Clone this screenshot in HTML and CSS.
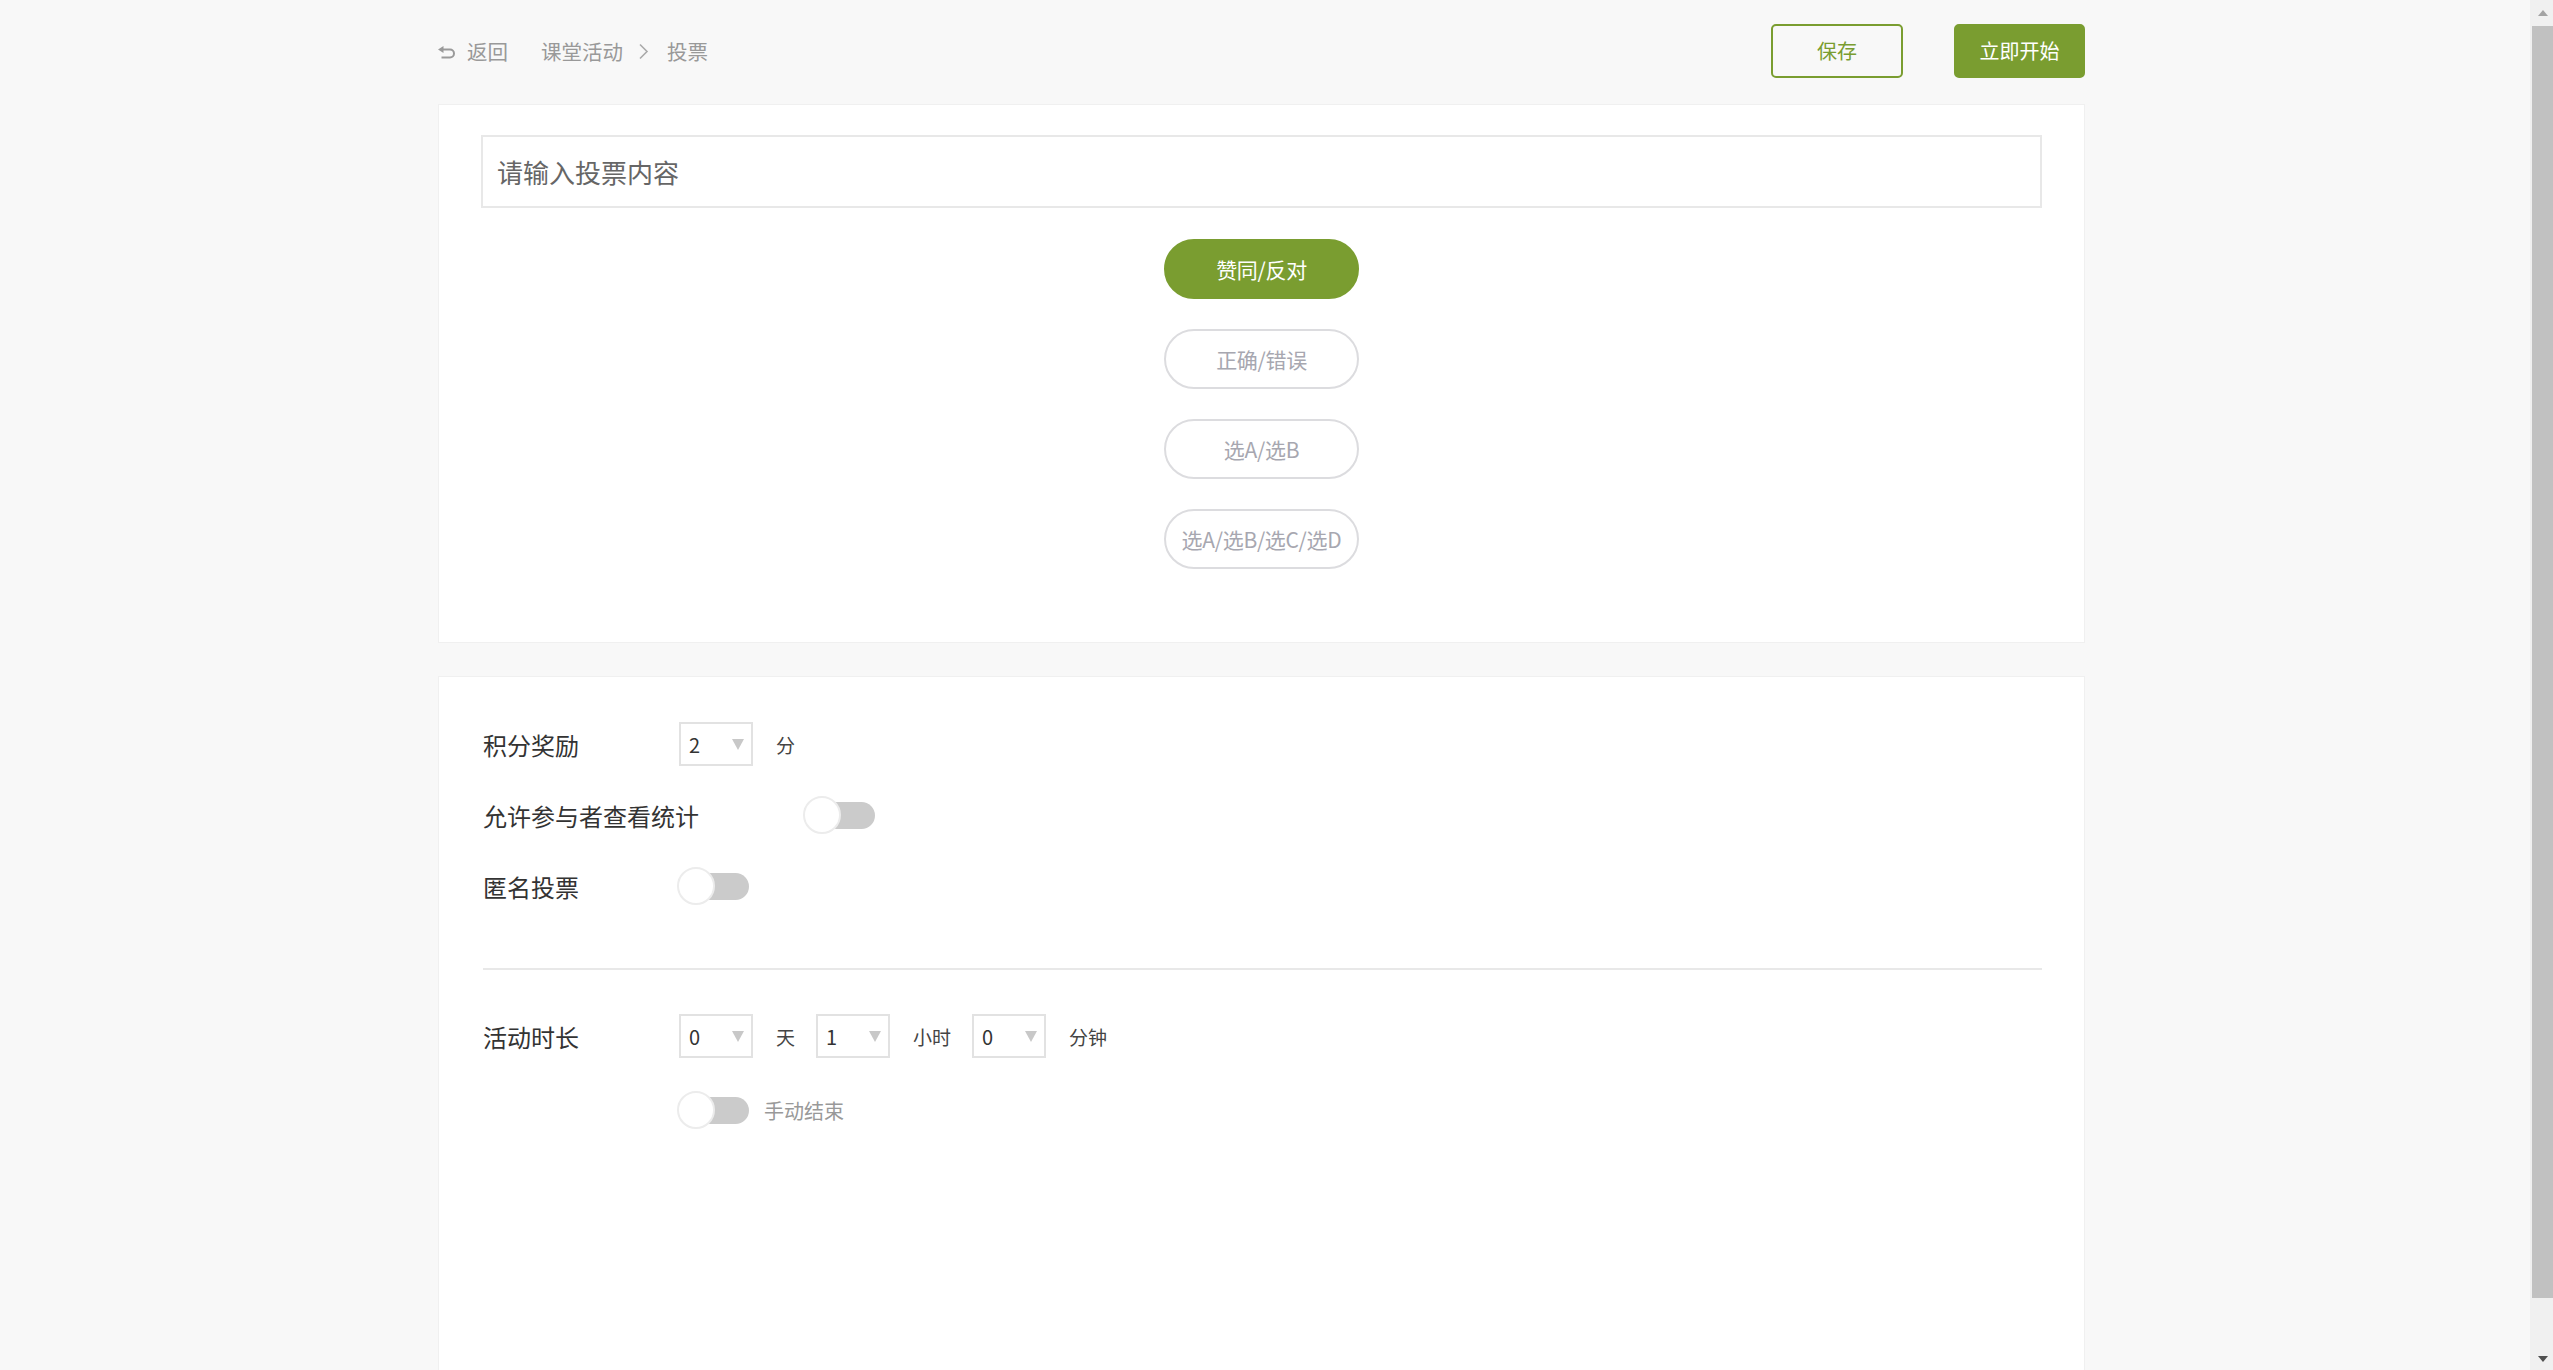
FILE: index.html
```html
<!DOCTYPE html>
<html lang="zh-CN">
<head>
<meta charset="utf-8">
<title>投票</title>
<link rel="stylesheet" href="styles.css">
</head>
<body>
<div class="app">
  <div class="main">
    <div class="container">
      <header class="topbar">
        <nav class="crumbs">
          <span class="back">
            <svg class="back-icon" width="18" height="13" viewBox="0 0 18 13">
              <polygon points="0,3.5 5.5,0 5.5,7" fill="#9a9a9a"/>
              <path d="M5 3.5 H12 A4 4 0 0 1 12 11.5 H3.5" fill="none" stroke="#9a9a9a" stroke-width="2"/>
            </svg>
            <span>返回</span>
          </span>
          <span class="crumb">课堂活动</span>
          <svg class="chev" width="11" height="17" viewBox="0 0 11 17"><polyline points="2,1.5 9,8.5 2,15.5" fill="none" stroke="#aaa" stroke-width="1.6"/></svg>
          <span class="crumb">投票</span>
        </nav>
        <div class="actions">
          <button class="btn btn-outline">保存</button>
          <button class="btn btn-solid">立即开始</button>
        </div>
      </header>

      <section class="card card-top">
        <input class="vote-input" type="text" placeholder="请输入投票内容">
        <div class="pills">
          <div class="pill active">赞同/反对</div>
          <div class="pill">正确/错误</div>
          <div class="pill">选A/选B</div>
          <div class="pill">选A/选B/选C/选D</div>
        </div>
      </section>

      <section class="card card-settings">
        <div class="row">
          <span class="label">积分奖励</span>
          <div class="select"><span>2</span><i class="caret"></i></div>
          <span class="unit">分</span>
        </div>
        <div class="row">
          <span class="label label-long">允许参与者查看统计</span>
          <div class="toggle"><span class="knob"></span><span class="track"></span></div>
        </div>
        <div class="row">
          <span class="label">匿名投票</span>
          <div class="toggle"><span class="knob"></span><span class="track"></span></div>
        </div>

        <div class="divider"></div>

        <div class="row row-duration">
          <span class="label">活动时长</span>
          <div class="select"><span>0</span><i class="caret"></i></div>
          <span class="unit">天</span>
          <div class="select"><span>1</span><i class="caret"></i></div>
          <span class="unit">小时</span>
          <div class="select"><span>0</span><i class="caret"></i></div>
          <span class="unit">分钟</span>
        </div>
        <div class="row row-manual">
          <div class="toggle"><span class="knob"></span><span class="track"></span></div>
          <span class="manual-text">手动结束</span>
        </div>
      </section>
    </div>
  </div>
  <div class="scrollbar">
    <div class="sb-btn"><i class="sb-up"></i></div>
    <div class="sb-thumb"></div>
    <div class="sb-rest"></div>
    <div class="sb-btn sb-btn-bottom"><i class="sb-down"></i></div>
  </div>
</div>
</body>
</html>
```

FILE: styles.css
```css
* { box-sizing: border-box; }

html, body {
  margin: 0;
  padding: 0;
  height: 1370px;
  overflow: hidden;
  background: #f8f8f8;
  font-family: "Noto Sans CJK SC", "Noto Sans", "Liberation Sans", sans-serif;
  color: #333;
}

.app {
  display: flex;
  height: 1370px;
  overflow: hidden;
}

.main {
  flex: 1;
  padding-right: 7px;
  overflow: hidden;
}

.container {
  width: 1647px;
  margin: 0 auto;
}

/* ---------- top bar ---------- */
.topbar {
  display: flex;
  align-items: center;
  justify-content: space-between;
  height: 54px;
  margin-top: 24px;
  margin-bottom: 26px;
}

.crumbs {
  display: flex;
  align-items: center;
  font-size: 20.5px;
  line-height: 28px;
  color: #999;
}

.back {
  display: flex;
  align-items: center;
  margin-right: 33px;
}

.back-icon {
  margin-right: 11px;
  margin-top: 2px;
}

.chev {
  margin: 0 18px 0 15px;
}

.actions {
  display: flex;
  gap: 51px;
}

.btn {
  height: 54px;
  border-radius: 5px;
  font-family: inherit;
  font-size: 20px;
  line-height: 1;
  padding: 0;
  cursor: pointer;
}

.btn-outline {
  width: 132px;
  border: 2px solid #7a9d30;
  background: transparent;
  color: #7a9d30;
}

.btn-solid {
  width: 131px;
  border: 2px solid #7a9d30;
  background: #7a9d30;
  color: #fff;
}

/* ---------- cards ---------- */
.card {
  background: #fff;
  border: 1px solid #f0f0f0;
}

.card-top {
  padding: 30px 42px 73px;
  margin-bottom: 33px;
}

.vote-input {
  display: block;
  width: 100%;
  height: 73px;
  border: 2px solid #e8e8e8;
  padding: 0 14px;
  font-family: inherit;
  font-size: 26px;
  color: #333;
  outline: none;
}

.vote-input::placeholder {
  color: #666;
}

.pills {
  display: flex;
  flex-direction: column;
  align-items: center;
  gap: 30px;
  margin-top: 31px;
}

.pill {
  width: 195px;
  height: 60px;
  border: 2px solid #dcdcdf;
  border-radius: 30px;
  display: flex;
  align-items: center;
  justify-content: center;
  font-size: 21px;
  color: #a7a7b0;
  white-space: nowrap;
  letter-spacing: -0.3px;
}

.pill.active {
  background: #7a9d30;
  border-color: #7a9d30;
  color: #fff;
}

/* ---------- settings ---------- */
.card-settings {
  padding: 45px 44px 300px;
}

.row {
  display: flex;
  align-items: center;
  height: 44px;
  margin-bottom: 27px;
}

.label {
  font-size: 24px;
  color: #333;
  margin-right: 100px;
  white-space: nowrap;
}

.label-long {
  margin-right: 106px;
}

.select {
  width: 74px;
  height: 44px;
  border: 2px solid #e2e2e2;
  display: flex;
  align-items: center;
  justify-content: space-between;
  padding: 0 7px 0 8px;
  font-size: 20px;
  color: #333;
}

.caret {
  width: 0;
  height: 0;
  border-left: 6.5px solid transparent;
  border-right: 6.5px solid transparent;
  border-top: 11px solid #c8c8c8;
}

.unit {
  font-size: 19px;
  color: #444;
  margin: 0 21px 0 23px;
  white-space: nowrap;
}

.toggle {
  display: flex;
  align-items: center;
  width: 72px;
  height: 38px;
  margin-left: -2px;
}

.knob {
  width: 38px;
  height: 38px;
  border-radius: 50%;
  background: #fff;
  border: 2px solid #ececec;
  position: relative;
  z-index: 1;
  flex: none;
}

.track {
  width: 53px;
  height: 27px;
  margin-left: -19px;
  background: #cbcbcb;
  border-radius: 0 14px 14px 0;
  flex: none;
}

.divider {
  height: 2px;
  background: #e8e8e8;
  margin: 60px -2px 44px 0;
}

.row-duration {
  margin-bottom: 30px;
}

.row-manual {
  padding-left: 196px;
}

.manual-text {
  font-size: 20px;
  color: #999;
  margin-left: 15px;
}

/* ---------- fake scrollbar ---------- */
.scrollbar {
  width: 23px;
  flex: none;
  background: #f0f0f0;
  display: flex;
  flex-direction: column;
}

.sb-btn {
  height: 26px;
  display: flex;
  align-items: center;
  justify-content: center;
  padding-left: 2px;
}

.sb-btn-bottom {
  height: 22px;
}

.sb-up {
  width: 0;
  height: 0;
  border-left: 5.5px solid transparent;
  border-right: 5.5px solid transparent;
  border-bottom: 6px solid #a3a3a3;
}

.sb-down {
  width: 0;
  height: 0;
  border-left: 5.5px solid transparent;
  border-right: 5.5px solid transparent;
  border-top: 6px solid #505050;
}

.sb-thumb {
  height: 1272px;
  margin-left: 2px;
  background: #c1c1c1;
}

.sb-rest {
  flex: 1;
}
```
